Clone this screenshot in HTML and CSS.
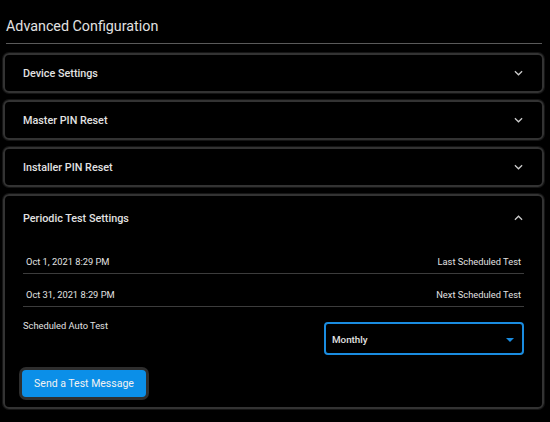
FILE: index.html
```html
<!DOCTYPE html>
<html lang="en">
<head>
    <meta charset="UTF-8">
    <title>Advanced Configuration</title>
    <link rel="stylesheet" href="styles.css">
</head>
<body>
    <div class="config-page">
        <h2 class="page-title">Advanced Configuration</h2>

        <div class="panel">
            <div class="panel-header">
                <span>Device Settings</span>
                <svg class="chevron" viewBox="0 0 10 6"><path d="M1 1l4 4 4-4"/></svg>
            </div>
        </div>

        <div class="panel">
            <div class="panel-header">
                <span>Master PIN Reset</span>
                <svg class="chevron" viewBox="0 0 10 6"><path d="M1 1l4 4 4-4"/></svg>
            </div>
        </div>

        <div class="panel">
            <div class="panel-header">
                <span>Installer PIN Reset</span>
                <svg class="chevron" viewBox="0 0 10 6"><path d="M1 1l4 4 4-4"/></svg>
            </div>
        </div>

        <div class="panel panel-open">
            <div class="panel-header">
                <span>Periodic Test Settings</span>
                <svg class="chevron" viewBox="0 0 10 6"><path d="M1 5l4-4 4 4"/></svg>
            </div>
            <div class="panel-body">
                <div class="info-row">
                    <span>Oct 1, 2021 8:29 PM</span>
                    <span>Last Scheduled Test</span>
                </div>
                <div class="info-row">
                    <span>Oct 31, 2021 8:29 PM</span>
                    <span>Next Scheduled Test</span>
                </div>
                <div class="auto-row">
                    <label class="auto-label" for="autoTest">Scheduled Auto Test</label>
                    <div class="select-box" id="autoTest">
                        <span>Monthly</span>
                        <svg class="caret" viewBox="0 0 10 5"><path d="M0 0h10L5 5z"/></svg>
                    </div>
                </div>
                <button type="button" class="test-btn">Send a Test Message</button>
            </div>
        </div>
    </div>
</body>
</html>
```

FILE: styles.css
```css
body {
    margin: 0;
    background-color: #000;
    color: #e2e2e2;
    font-family: Roboto, "Liberation Sans", sans-serif;
}
.config-page {
    padding: 0 6px 0 3px;
}
.page-title {
    margin: 0 2px 9px 3px;
    padding: 17px 0 8px;
    font-size: 14.3px;
    font-weight: 400;
    line-height: 18px;
    border-bottom: 1px solid #5a5a5a;
}
.panel {
    border: 2px solid #333;
    border-radius: 6px;
    margin-bottom: 7px;
    box-shadow: 0 0 0 1px #151515;
}
.panel-header {
    display: flex;
    align-items: center;
    justify-content: space-between;
    height: 36px;
    padding: 0 19px 0 18px;
    font-size: 10.8px;
    font-weight: 500;
}
.panel-open .panel-header {
    height: 44px;
}
.chevron {
    width: 9px;
    height: 6px;
    fill: none;
    stroke: #ccc;
    stroke-width: 1.4;
}
.panel-body {
    padding: 0 18px 10px;
}
.info-row {
    display: flex;
    align-items: flex-end;
    justify-content: space-between;
    height: 34px;
    padding: 0 3px 5px;
    box-sizing: border-box;
    border-bottom: 1px solid #3c3c3c;
    font-size: 9.3px;
    line-height: 12px;
}
.info-row + .info-row {
    height: 33px;
}
.auto-row {
    display: flex;
    justify-content: space-between;
    align-items: flex-start;
    font-size: 9.3px;
    line-height: 12px;
}
.auto-label {
    margin-top: 13px;
}
.select-box {
    display: flex;
    align-items: center;
    justify-content: space-between;
    width: 200px;
    height: 33px;
    margin-top: 15px;
    padding: 2px 8px 0 6px;
    box-sizing: border-box;
    border: 2px solid #1a8ce0;
    border-radius: 4px;
    font-size: 9.8px;
    font-weight: 500;
}
.caret {
    width: 8px;
    height: 4px;
    fill: #1a8ce0;
}
.test-btn {
    display: block;
    margin: 15px 0 0 -1px;
    padding: 0;
    width: 124px;
    height: 27px;
    background-color: #0b8fe8;
    color: #f2f2f2;
    border: none;
    border-radius: 4px;
    box-shadow: 0 0 0 3px #2e2e2e;
    font-family: Roboto, "Liberation Sans", sans-serif;
    font-size: 10.5px;
    white-space: nowrap;
}
```
